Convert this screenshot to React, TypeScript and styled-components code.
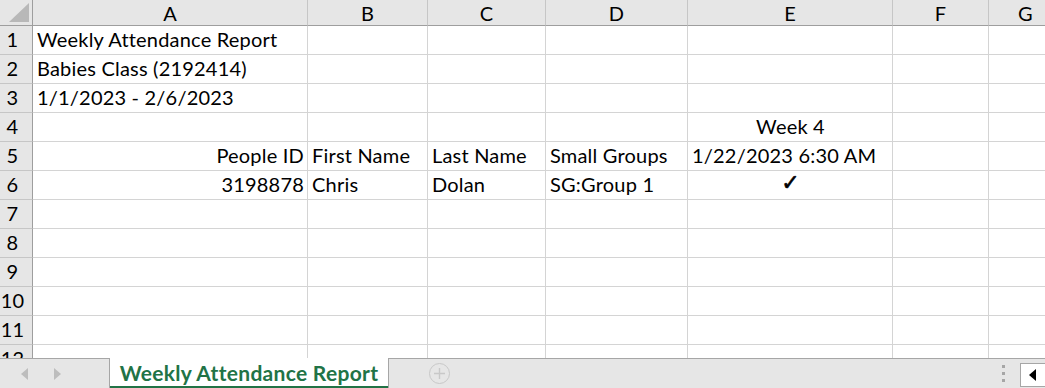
import styled, { createGlobalStyle } from "styled-components";

const GlobalStyle = createGlobalStyle`
  html, body {
    margin: 0;
    padding: 0;
    overflow: hidden;
    background: #ffffff;
  }
  body {
    font-family: Lato, "Open Sans", sans-serif;
    color: #000;
  }
`;

const Window = styled.div`
  width: 1045px;
  height: 388px;
  display: flex;
  flex-direction: column;
  overflow: hidden;
`;

const Sheet = styled.div`
  height: 358px;
  overflow: hidden;
  display: grid;
  grid-template-columns: 33px 275px 120px 118px 142px 205px 96px 74px;
  grid-template-rows: 26px;
  grid-auto-rows: 29px;
  font-size: 20px;
  letter-spacing: 0.2px;
`;

const Corner = styled.div`
  position: relative;
  background: #e6e6e6;
  border-right: 1px solid #9e9e9e;
  border-bottom: 1px solid #9e9e9e;
  box-sizing: border-box;
  & > svg {
    position: absolute;
    right: 3px;
    bottom: 3px;
  }
`;

const ColHeader = styled.div`
  background: #e6e6e6;
  border-right: 1px solid #c6c6c6;
  border-bottom: 1px solid #9e9e9e;
  box-sizing: border-box;
  display: flex;
  align-items: center;
  justify-content: center;
  line-height: 1;
  padding-top: 1px;
`;

const RowHeader = styled.div`
  background: #e6e6e6;
  border-right: 1px solid #9e9e9e;
  border-bottom: 1px solid #c6c6c6;
  box-sizing: border-box;
  display: flex;
  align-items: flex-end;
  justify-content: center;
  padding: 0 7px 3px 0;
  line-height: 1.2;
`;

const Cell = styled.div<{ $align?: "left" | "right" | "center" }>`
  border-right: 1px solid #d4d4d4;
  border-bottom: 1px solid #d4d4d4;
  box-sizing: border-box;
  display: flex;
  align-items: flex-end;
  justify-content: ${(p) =>
    p.$align === "right" ? "flex-end" : p.$align === "center" ? "center" : "flex-start"};
  padding: 0 3px 3px 4px;
  line-height: 1.2;
  white-space: nowrap;
`;

const Check = styled.span`
  font-family: "DejaVu Sans", sans-serif;
  font-size: 22px;
  font-weight: bold;
  line-height: 1;
  padding-bottom: 2px;
  -webkit-text-stroke: 0.6px #000;
`;

const TabBar = styled.div`
  height: 30px;
  display: flex;
  background: #e6e6e6;
`;

const NavArea = styled.div`
  width: 110px;
  border-top: 1px solid #a6a6a6;
  border-right: 1px solid #a6a6a6;
  display: flex;
  align-items: center;
  gap: 26px;
  padding-left: 21px;
  box-sizing: border-box;
`;

const ActiveTab = styled.div`
  width: 278px;
  background: #ffffff;
  border-bottom: 2px solid #217346;
  box-sizing: border-box;
  display: flex;
  align-items: center;
  justify-content: center;
  color: #217346;
  font-size: 21px;
  font-weight: bold;
  letter-spacing: 0.3px;
  padding-top: 1px;
`;

const Filler = styled.div`
  flex: 1;
  border-top: 1px solid #a6a6a6;
  border-left: 1px solid #a6a6a6;
  display: flex;
  align-items: center;
  padding-left: 40px;
  box-sizing: border-box;
`;

const AddButton = styled.div`
  width: 19px;
  height: 19px;
  border: 1px solid #c8c8c8;
  border-radius: 50%;
  display: flex;
  align-items: center;
  justify-content: center;
`;

const Dots = styled.div`
  margin-left: auto;
  display: flex;
  flex-direction: column;
  gap: 4px;
  margin-right: 15px;
  & > span {
    width: 3px;
    height: 3px;
    background: #a6a6a6;
  }
`;

const ScrollBox = styled.div`
  width: 25px;
  height: 24px;
  background: #ffffff;
  border: 1px solid #a6a6a6;
  border-right: none;
  display: flex;
  align-items: center;
  padding-left: 8px;
  box-sizing: border-box;
  margin-top: 3px;
`;

const colLetters = ["A", "B", "C", "D", "E", "F", "G"];

type Row = { [col: number]: { text: string; align?: "left" | "right" | "center"; check?: boolean } };

const rows: Row[] = [
  { 0: { text: "Weekly Attendance Report" } },
  { 0: { text: "Babies Class (2192414)" } },
  { 0: { text: "1/1/2023 - 2/6/2023" } },
  { 4: { text: "Week 4", align: "center" } },
  {
    0: { text: "People ID", align: "right" },
    1: { text: "First Name" },
    2: { text: "Last Name" },
    3: { text: "Small Groups" },
    4: { text: "1/22/2023 6:30 AM" },
  },
  {
    0: { text: "3198878", align: "right" },
    1: { text: "Chris" },
    2: { text: "Dolan" },
    3: { text: "SG:Group 1" },
    4: { text: "✓", align: "center", check: true },
  },
  {},
  {},
  {},
  {},
  {},
  {},
];

const Tri = ({ dir, color }: { dir: "left" | "right"; color: string }) => (
  <svg width="7" height="12" viewBox="0 0 7 12">
    {dir === "left" ? (
      <polygon points="7,0 7,12 0,6" fill={color} />
    ) : (
      <polygon points="0,0 0,12 7,6" fill={color} />
    )}
  </svg>
);

const App = () => {
  return (
    <Window>
      <GlobalStyle />
      <Sheet>
        <Corner>
          <svg width="20" height="19" viewBox="0 0 20 19">
            <polygon points="20,0 20,19 0,19" fill="#b8b8b8" />
          </svg>
        </Corner>
        {colLetters.map((c) => (
          <ColHeader key={c}>{c}</ColHeader>
        ))}
        {rows.map((row, r) => [
          <RowHeader key={"h" + r}>{r + 1}</RowHeader>,
          ...colLetters.map((_, c) => {
            const cell = row[c];
            return (
              <Cell key={r + "-" + c} $align={cell?.align}>
                {cell ? cell.check ? <Check>{cell.text}</Check> : cell.text : null}
              </Cell>
            );
          }),
        ])}
      </Sheet>
      <TabBar>
        <NavArea>
          <Tri dir="left" color="#bdbdbd" />
          <Tri dir="right" color="#bdbdbd" />
        </NavArea>
        <ActiveTab>Weekly Attendance Report</ActiveTab>
        <Filler>
          <AddButton>
            <svg width="11" height="11" viewBox="0 0 11 11">
              <path d="M5.5 0v11M0 5.5h11" stroke="#c8c8c8" strokeWidth="1.4" />
            </svg>
          </AddButton>
          <Dots>
            <span />
            <span />
            <span />
          </Dots>
          <ScrollBox>
            <Tri dir="left" color="#000" />
          </ScrollBox>
        </Filler>
      </TabBar>
    </Window>
  );
};

export default App;
